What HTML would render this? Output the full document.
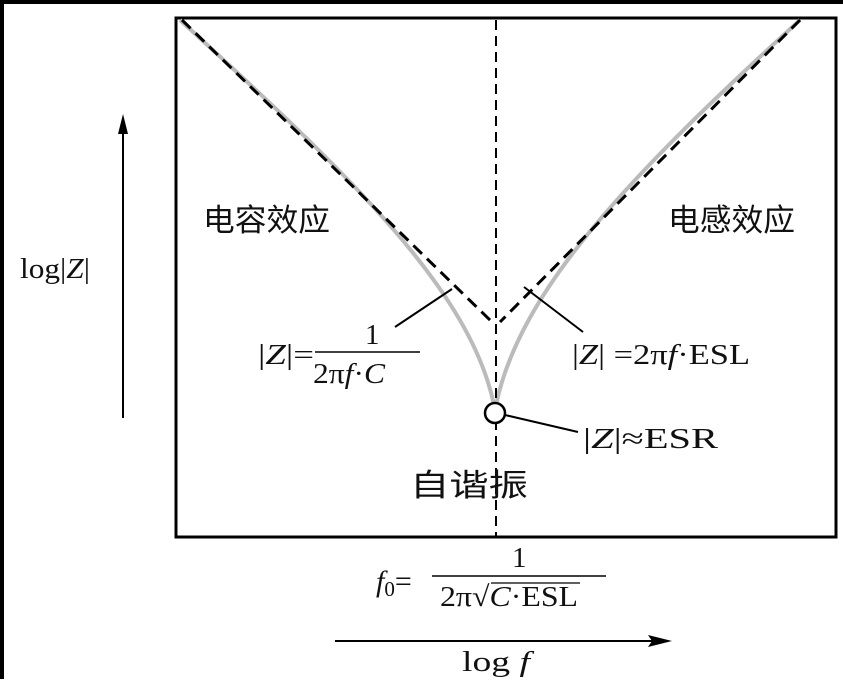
<!DOCTYPE html><html><head><meta charset="utf-8"><style>
body{margin:0;width:843px;height:679px;background:#fff;overflow:hidden}
svg text{font-family:"Liberation Serif","Noto Serif CJK SC",serif;fill:#111}
.cj{font-family:"Liberation Sans","Noto Sans CJK SC",sans-serif}
</style></head><body>
<svg width="843" height="679" viewBox="0 0 843 679">
<rect x="0" y="0" width="843" height="4" fill="#000"/>
<rect x="0" y="0" width="4" height="679" fill="#000"/>
<rect x="176" y="18" width="660" height="519" fill="none" stroke="#000" stroke-width="3"/>
<path d="M180 20 C 350 175, 470 290, 494 405" fill="none" stroke="#bbb" stroke-width="4"/>
<path d="M800 20 C 630 175, 520 290, 496 405" fill="none" stroke="#bbb" stroke-width="4"/>
<path d="M182 20 L492 322 M800 20 L500 322" stroke="#000" stroke-width="3" stroke-dasharray="12,7" fill="none"/>
<line x1="496" y1="20" x2="496" y2="537" stroke="#000" stroke-width="2" stroke-dasharray="10,6"/>
<circle cx="495" cy="413" r="10" fill="#fff" stroke="#000" stroke-width="2.5"/>
<path d="M395 327 L452 289 M583 332 L524 287 M505 415 L578 432" stroke="#000" stroke-width="2" fill="none"/>
<line x1="123" y1="418" x2="123" y2="128" stroke="#000" stroke-width="2"/>
<path d="M123 114 L118 134 L128 134Z" fill="#000"/>
<line x1="335" y1="641" x2="655" y2="641" stroke="#000" stroke-width="2"/>
<path d="M672 641 L648 635 L652 641 L648 647Z" fill="#000"/>
<text class="cj" x="203" y="231" font-size="31" textLength="127" lengthAdjust="spacingAndGlyphs">电容效应</text>
<text class="cj" x="668" y="231" font-size="31" textLength="127" lengthAdjust="spacingAndGlyphs">电感效应</text>
<text class="cj" x="410" y="496" font-size="31" textLength="118" lengthAdjust="spacingAndGlyphs">自谐振</text>
<text x="20" y="278" font-size="29" textLength="70" lengthAdjust="spacingAndGlyphs">log|<tspan font-style="italic">Z</tspan>|</text>
<text x="258" y="364" font-size="29" textLength="56" lengthAdjust="spacingAndGlyphs">|<tspan font-style="italic">Z</tspan>|=</text>
<text x="365" y="344" font-size="29">1</text>
<line x1="315" y1="352" x2="420" y2="352" stroke="#000" stroke-width="1.5"/>
<text x="313" y="383" font-size="29" textLength="72" lengthAdjust="spacingAndGlyphs">2π<tspan font-style="italic">f</tspan>·<tspan font-style="italic">C</tspan></text>
<text x="572" y="364" font-size="29" textLength="178" lengthAdjust="spacingAndGlyphs">|<tspan font-style="italic">Z</tspan>| =2π<tspan font-style="italic">f</tspan>·ESL</text>
<text x="583" y="448" font-size="29" textLength="135" lengthAdjust="spacingAndGlyphs">|<tspan font-style="italic">Z</tspan>|≈ESR</text>
<text x="376" y="591" font-size="30"><tspan font-style="italic">f</tspan><tspan font-size="21" dy="5">0</tspan><tspan dy="-5">=</tspan></text>
<text x="512" y="567" font-size="29">1</text>
<line x1="432" y1="576" x2="606" y2="576" stroke="#000" stroke-width="1.5"/>
<text x="440" y="606" font-size="29" textLength="138" lengthAdjust="spacingAndGlyphs">2π√<tspan font-style="italic">C</tspan>·ESL</text>
<line x1="491" y1="583" x2="580" y2="583" stroke="#000" stroke-width="1.2"/>
<text x="462" y="671" font-size="29" textLength="68" lengthAdjust="spacingAndGlyphs">log <tspan font-style="italic">f</tspan></text>
</svg></body></html>
